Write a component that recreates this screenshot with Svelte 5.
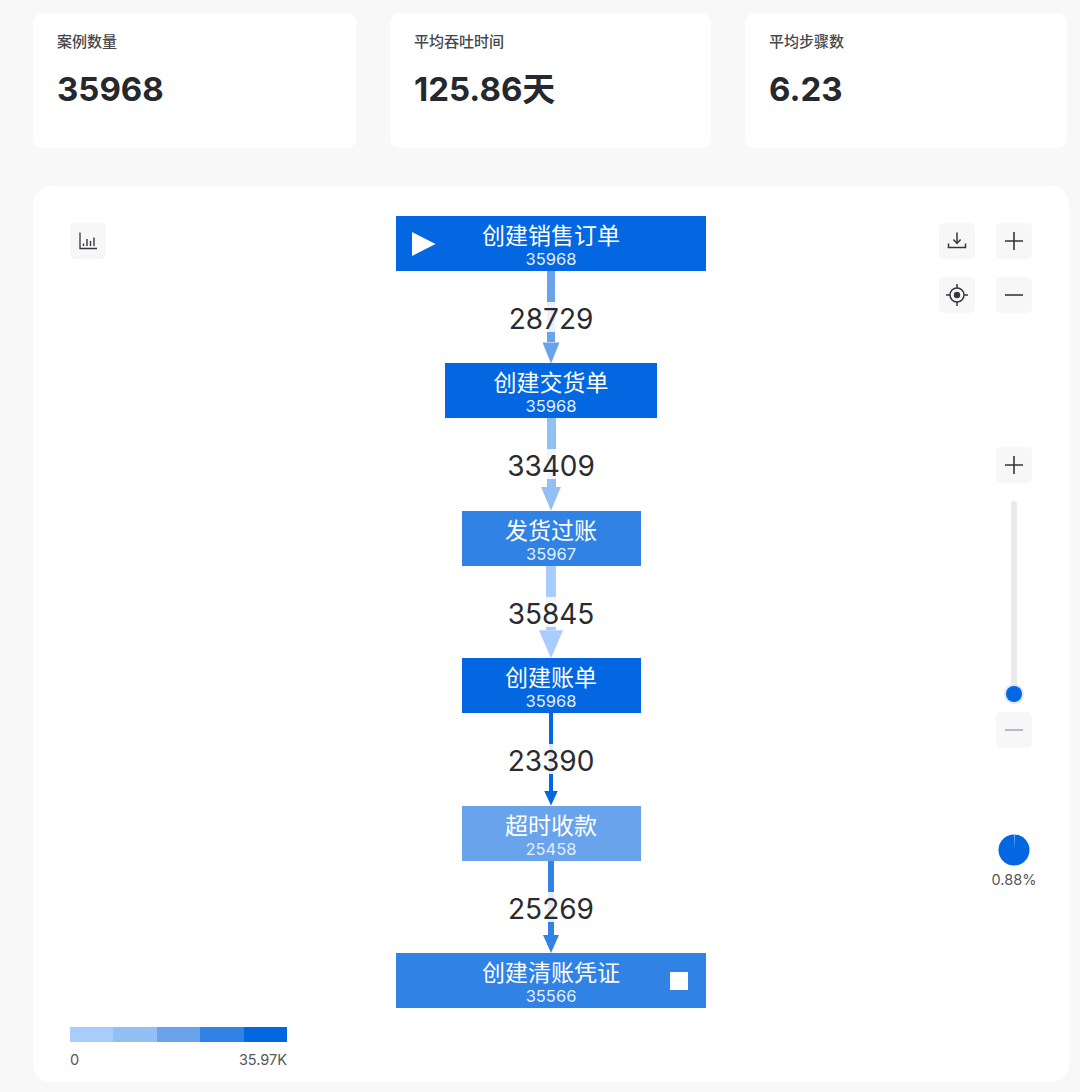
<script>
    const dark = "#0267e1";
    const mid = "#3082e5";
    const soft = "#68a3ec";
    const pale = "#93c0f4";
    const faint = "#a8ccfb";

    const stats = [
        { label: "案例数量", value: "35968" },
        { label: "平均吞吐时间", value: "125.86天" },
        { label: "平均步骤数", value: "6.23" },
    ];

    const steps = [
        { name: "创建销售订单", count: 35968, width: 310, color: dark, mark: "start" },
        { name: "创建交货单", count: 35968, width: 212, color: dark },
        { name: "发货过账", count: 35967, width: 179, color: mid },
        { name: "创建账单", count: 35968, width: 179, color: dark },
        { name: "超时收款", count: 25458, width: 179, color: soft },
        { name: "创建清账凭证", count: 35566, width: 310, color: mid, mark: "end" },
    ];

    const edges = [
        { count: 28729, color: soft, shaft: 8, headW: 17, headH: 21 },
        { count: 33409, color: pale, shaft: 9, headW: 20, headH: 24 },
        { count: 35845, color: faint, shaft: 10, headW: 24, headH: 28 },
        { count: 23390, color: dark, shaft: 4, headW: 14, headH: 15 },
        { count: 25269, color: mid, shaft: 6, headW: 16, headH: 18 },
    ];

    const legend = [faint, pale, soft, mid, dark];
</script>

<div class="page">
    <div class="stats">
        {#each stats as stat}
            <div class="stat">
                <div class="stat-label">{stat.label}</div>
                <div class="stat-value">{stat.value}</div>
            </div>
        {/each}
    </div>

    <div class="canvas">
        <div class="flow">
            {#each steps as step, i}
                <div class="node" style:width="{step.width}px" style:background={step.color}>
                    {#if step.mark === "start"}
                        <svg class="mark start" width="24" height="24" viewBox="0 0 24 24">
                            <path d="M0 0 L23.5 12 L0 24 Z" fill="#fff" />
                        </svg>
                    {/if}
                    <div class="node-name">{step.name}</div>
                    <div class="node-count">{step.count}</div>
                    {#if step.mark === "end"}
                        <div class="mark end"></div>
                    {/if}
                </div>
                {#if edges[i]}
                    <div class="edge">
                        <div class="shaft" style:width="{edges[i].shaft}px" style:background={edges[i].color}></div>
                        <div
                            class="head"
                            style:width="{edges[i].headW}px"
                            style:height="{edges[i].headH}px"
                            style:background={edges[i].color}
                        ></div>
                        <div class="edge-label">{edges[i].count}</div>
                    </div>
                {/if}
            {/each}
        </div>

        <button class="tool chart-btn" aria-label="chart">
            <svg width="20" height="20" viewBox="0 0 20 20" fill="none" stroke="#33363b">
                <path d="M2 1.5 V17.5 H19" stroke-width="1.3" />
                <path d="M5.5 15 V12.5 M9 15 V8 M12.5 15 V10 M16 15 V6.5" stroke-width="1.4" />
            </svg>
        </button>

        <div class="toolbar">
            <button class="tool" aria-label="download">
                <svg width="20" height="20" viewBox="0 0 20 20" fill="none" stroke="#33363b" stroke-width="1.5">
                    <path d="M10 1.5 V12" />
                    <path d="M6.4 8.6 L10 12.4 L13.6 8.6" />
                    <path d="M1.5 12.5 V16.5 H18.5 V12.5" />
                </svg>
            </button>
            <button class="tool" aria-label="zoom in">
                <svg width="20" height="20" viewBox="0 0 20 20" fill="none" stroke="#33363b" stroke-width="1.6">
                    <path d="M1 10 H19 M10 1 V19" />
                </svg>
            </button>
            <button class="tool" aria-label="locate">
                <svg width="24" height="24" viewBox="0 0 24 24" fill="none" stroke="#33363b" stroke-width="1.5">
                    <circle cx="12" cy="12" r="7" />
                    <circle cx="12" cy="12" r="3.2" fill="#33363b" stroke="none" />
                    <path d="M12 1 V5 M12 19 V23 M1 12 H5 M19 12 H23" />
                </svg>
            </button>
            <button class="tool" aria-label="zoom out">
                <svg width="20" height="20" viewBox="0 0 20 20" fill="none" stroke="#33363b" stroke-width="1.6">
                    <path d="M1 10 H19" />
                </svg>
            </button>
        </div>

        <div class="slider">
            <button class="tool" aria-label="more">
                <svg width="20" height="20" viewBox="0 0 20 20" fill="none" stroke="#33363b" stroke-width="1.6">
                    <path d="M1 10 H19 M10 1 V19" />
                </svg>
            </button>
            <div class="track"><div class="knob"></div></div>
            <button class="tool" aria-label="less">
                <svg width="20" height="20" viewBox="0 0 20 20" fill="none" stroke="#a9abae" stroke-width="1.6">
                    <path d="M1 10 H19" />
                </svg>
            </button>
            <svg class="pie" width="32" height="32" viewBox="0 0 32 32">
                <circle cx="16" cy="16" r="15.5" fill={dark} />
                <path d="M16 16 L16 0.5 L17 0.5 Z" fill="#8fbcf3" />
            </svg>
            <div class="percent">0.88%</div>
        </div>

        <div class="legend">
            <div class="legend-bar">
                {#each legend as color}
                    <div class="legend-step" style:background={color}></div>
                {/each}
            </div>
            <div class="legend-text">
                <span>0</span>
                <span>35.97K</span>
            </div>
        </div>
    </div>
</div>

<style>
    :global(body) {
        background: #f8f8f8;
    }

    .page {
        box-sizing: border-box;
        height: 1092px;
        padding: 13px 11px 10px 33px;
        font-family: Inter, "Noto Sans CJK SC", sans-serif;
        color: #25282c;
    }

    .stats {
        display: grid;
        grid-template-columns: 323px 321px 322px;
        gap: 34px;
    }

    .stat {
        height: 135px;
        box-sizing: border-box;
        padding: 20px 24px;
        background: #fff;
        border-radius: 9px;
    }

    .stat-label {
        font-size: 15px;
        line-height: 18px;
        font-weight: 500;
        color: #45484c;
    }

    .stat-value {
        margin-top: 18px;
        font-size: 33px;
        line-height: 40px;
        font-weight: 700;
    }

    .canvas {
        position: relative;
        margin-top: 38px;
        height: 896px;
        box-sizing: border-box;
        padding-top: 30px;
        background: #fff;
        border-radius: 18px;
    }

    .flow {
        display: flex;
        flex-direction: column;
        align-items: center;
    }

    .node {
        position: relative;
        height: 55px;
        box-sizing: border-box;
        padding-top: 6px;
        color: #fff;
        text-align: center;
    }

    .node-name {
        font-size: 23px;
        line-height: 28px;
    }

    .node-count {
        font-size: 16.5px;
        line-height: 18px;
        color: #e3eefc;
    }

    .mark {
        position: absolute;
    }

    .mark.start {
        left: 16px;
        top: 16px;
    }

    .mark.end {
        right: 18px;
        top: 19px;
        width: 18px;
        height: 18px;
        background: #fff;
    }

    .edge {
        position: relative;
        height: 92.4px;
        display: flex;
        flex-direction: column;
        align-items: center;
    }

    .shaft {
        flex: 1;
    }

    .head {
        flex: none;
        clip-path: polygon(0 0, 100% 0, 50% 100%);
    }

    .edge-label {
        position: absolute;
        top: 31px;
        left: 50%;
        transform: translateX(-50%);
        height: 30px;
        line-height: 35px;
        font-size: 28px;
        color: #2b2b2e;
        background: rgba(255, 255, 255, 0.86);
    }

    .tool {
        width: 36px;
        height: 36px;
        padding: 0;
        display: flex;
        align-items: center;
        justify-content: center;
        border: none;
        border-radius: 5px;
        background: #f7f7f7;
    }

    .chart-btn {
        position: absolute;
        left: 37px;
        top: 37px;
    }

    .toolbar {
        position: absolute;
        left: 906px;
        top: 37px;
        display: grid;
        grid-template-columns: 36px 36px;
        gap: 18px 21px;
    }

    .slider {
        position: absolute;
        left: 963px;
        top: 261px;
        width: 36px;
        display: flex;
        flex-direction: column;
        align-items: center;
    }

    .track {
        position: relative;
        margin-top: 18px;
        width: 6px;
        height: 193px;
        margin-bottom: 18px;
        background: #e9e9e9;
        border-radius: 3px;
    }

    .knob {
        position: absolute;
        left: -5px;
        bottom: -8px;
        width: 16px;
        height: 16px;
        border-radius: 50%;
        background: #0267e1;
        box-shadow: 0 0 0 2px #d7e6f9;
    }

    .pie {
        margin-top: 86px;
    }

    .percent {
        margin-top: 5px;
        font-size: 14.5px;
        line-height: 17px;
        color: #55585c;
        white-space: nowrap;
    }

    .legend {
        position: absolute;
        left: 37px;
        top: 841px;
        width: 217px;
    }

    .legend-bar {
        display: flex;
        height: 15px;
    }

    .legend-step {
        flex: 1;
    }

    .legend-text {
        display: flex;
        justify-content: space-between;
        margin-top: 9px;
        font-size: 14.5px;
        line-height: 17px;
        color: #55585c;
    }
</style>
